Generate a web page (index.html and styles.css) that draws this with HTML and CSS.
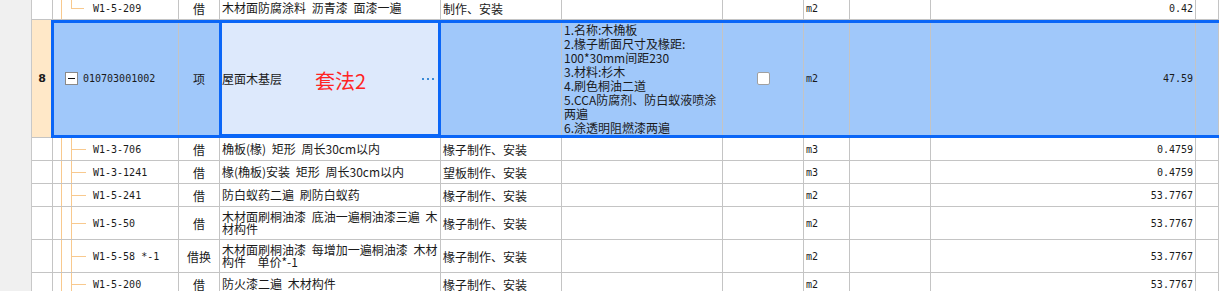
FILE: index.html
```html
<!DOCTYPE html>
<html lang="zh-CN">
<head>
    <meta charset="UTF-8">
    <title>清单定额</title>
    <link rel="stylesheet" href="styles.css">
</head>
<body>
    <div class="sheet">
        <div class="gutter"></div>
        <div class="rows">
            <div class="row">
                <div class="cell num"></div>
                <div class="cell tree last mono">W1-5-209</div>
                <div class="cell kind">借</div>
                <div class="cell name">木材面防腐涂料 沥青漆 面漆一遍</div>
                <div class="cell">制作、安装</div>
                <div class="cell"></div>
                <div class="cell"></div>
                <div class="cell mono">m2</div>
                <div class="cell"></div>
                <div class="cell qty mono">0.42</div>
                <div class="cell"></div>
            </div>

            <div class="row sel">
                <div class="cell num">8</div>
                <div class="cell tree open mono"><span class="toggle"></span>010703001002</div>
                <div class="cell kind">项</div>
                <div class="cell name active">屋面木基层<span class="anno">套法2</span><svg class="more" width="12" height="2" viewBox="0 0 12 2"><rect x="0" y="0" width="2" height="2"/><rect x="5" y="0" width="2" height="2"/><rect x="10" y="0" width="2" height="2"/></svg></div>
                <div class="cell"></div>
                <div class="cell desc">1.名称:木桷板<br>2.椽子断面尺寸及椽距:<br>100*30mm间距230<br>3.材料:杉木<br>4.刷色桐油二道<br>5.CCA防腐剂、防白蚁液喷涂<br>两遍<br>6.涂透明阻燃漆两遍</div>
                <div class="cell center"><span class="check"></span></div>
                <div class="cell mono">m2</div>
                <div class="cell"></div>
                <div class="cell qty mono">47.59</div>
                <div class="cell"></div>
            </div>

            <div class="row">
                <div class="cell num"></div>
                <div class="cell tree child mono">W1-3-706</div>
                <div class="cell kind">借</div>
                <div class="cell name">桷板(椽) 矩形 周长30cm以内</div>
                <div class="cell">椽子制作、安装</div>
                <div class="cell"></div>
                <div class="cell"></div>
                <div class="cell mono">m3</div>
                <div class="cell"></div>
                <div class="cell qty mono">0.4759</div>
                <div class="cell"></div>
            </div>

            <div class="row">
                <div class="cell num"></div>
                <div class="cell tree child mono">W1-3-1241</div>
                <div class="cell kind">借</div>
                <div class="cell name">椽(桷板)安装 矩形 周长30cm以内</div>
                <div class="cell">望板制作、安装</div>
                <div class="cell"></div>
                <div class="cell"></div>
                <div class="cell mono">m3</div>
                <div class="cell"></div>
                <div class="cell qty mono">0.4759</div>
                <div class="cell"></div>
            </div>

            <div class="row">
                <div class="cell num"></div>
                <div class="cell tree child mono">W1-5-241</div>
                <div class="cell kind">借</div>
                <div class="cell name">防白蚁药二遍 刷防白蚁药</div>
                <div class="cell">椽子制作、安装</div>
                <div class="cell"></div>
                <div class="cell"></div>
                <div class="cell mono">m2</div>
                <div class="cell"></div>
                <div class="cell qty mono">53.7767</div>
                <div class="cell"></div>
            </div>

            <div class="row tall">
                <div class="cell num"></div>
                <div class="cell tree child mono">W1-5-50</div>
                <div class="cell kind">借</div>
                <div class="cell name">木材面刷桐油漆 底油一遍桐油漆三遍 木<br>材构件</div>
                <div class="cell">椽子制作、安装</div>
                <div class="cell"></div>
                <div class="cell"></div>
                <div class="cell mono">m2</div>
                <div class="cell"></div>
                <div class="cell qty mono">53.7767</div>
                <div class="cell"></div>
            </div>

            <div class="row tall">
                <div class="cell num"></div>
                <div class="cell tree child mono">W1-5-58 *-1</div>
                <div class="cell kind">借换</div>
                <div class="cell name">木材面刷桐油漆 每增加一遍桐油漆 木材<br>构件&nbsp; 单价*-1</div>
                <div class="cell">椽子制作、安装</div>
                <div class="cell"></div>
                <div class="cell"></div>
                <div class="cell mono">m2</div>
                <div class="cell"></div>
                <div class="cell qty mono">53.7767</div>
                <div class="cell"></div>
            </div>

            <div class="row">
                <div class="cell num"></div>
                <div class="cell tree child mono">W1-5-200</div>
                <div class="cell kind">借</div>
                <div class="cell name">防火漆二遍 木材构件</div>
                <div class="cell">椽子制作、安装</div>
                <div class="cell"></div>
                <div class="cell"></div>
                <div class="cell mono">m2</div>
                <div class="cell"></div>
                <div class="cell qty mono">53.7767</div>
                <div class="cell"></div>
            </div>
        </div>
    </div>
</body>
</html>
```

FILE: styles.css
```css
html, body {
    margin: 0;
    height: 100%;
    overflow: hidden;
    background: #fff;
}
body {
    font-family: "Noto Sans CJK SC", sans-serif;
    font-size: 12px;
    color: #1a1a1a;
}
.sheet {
    display: flex;
    margin-top: -3px;
}
.gutter {
    flex: none;
    width: 31px;
    background: #f0f0f0;
    border-right: 1px solid #c8c8c8;
}
.rows { flex: 1; }
.row {
    display: grid;
    grid-template-columns: 21px 126px 41px 221px 121px 161px 81px 46px 81px 265px 1fr;
    height: 23px;
}
.row.tall { height: 33px; }
.cell {
    box-sizing: border-box;
    display: flex;
    align-items: center;
    padding: 0 2px;
    border-right: 1px solid #c4c4c4;
    border-bottom: 1px solid #c4c4c4;
    white-space: nowrap;
    overflow: hidden;
}
.mono {
    font-family: "DejaVu Sans Mono", monospace;
    font-size: 10px;
    white-space: pre;
}
.num {
    justify-content: center;
    font-family: "DejaVu Sans", sans-serif;
    font-weight: bold;
    font-size: 11px;
}
.kind, .center { justify-content: center; }
.qty { justify-content: flex-end; }
.name {
    word-spacing: 3px;
    line-height: 12px;
}

/* tree guide lines */
.tree {
    --tl: #f8c98e;
    padding-left: 40px;
}
.tree.child {
    background:
        linear-gradient(var(--tl), var(--tl)) 8px 0 / 1px 100% no-repeat,
        linear-gradient(var(--tl), var(--tl)) 18px 0 / 1px 100% no-repeat,
        linear-gradient(var(--tl), var(--tl)) 19px 50% / 14px 1px no-repeat;
}
.tree.last {
    background:
        linear-gradient(var(--tl), var(--tl)) 8px 0 / 1px 100% no-repeat,
        linear-gradient(var(--tl), var(--tl)) 18px 0 / 1px 50% no-repeat,
        linear-gradient(var(--tl), var(--tl)) 18px 50% / 13px 1px no-repeat;
}
.tree.open {
    padding-left: 12px;
    background:
        linear-gradient(var(--tl), var(--tl)) 8px 0 / 1px 100% no-repeat,
        linear-gradient(var(--tl), var(--tl)) 8px 50% / 4px 1px no-repeat,
        linear-gradient(var(--tl), var(--tl)) 18px 100% / 1px calc(50% - 6px) no-repeat;
}
.toggle {
    flex: none;
    box-sizing: border-box;
    width: 13px;
    height: 13px;
    margin-right: 5px;
    border: 1px solid #8a8a8a;
    background: #fff linear-gradient(#111, #111) center / 7px 1px no-repeat;
}

/* selected row */
.row.sel {
    position: relative;
    height: 118px;
}
.sel .cell { background: #a0c8fa; }
.sel .num { background: #ffe8c8; }
.sel .tree { background-color: #a0c8fa; }
.row.sel::after {
    content: "";
    position: absolute;
    left: 19px;
    right: -3px;
    top: 0;
    bottom: 0;
    border: 3px solid #0a66f7;
    pointer-events: none;
}
.sel .active {
    position: relative;
    overflow: visible;
    background: #dde9fc;
}
.sel .active::after {
    content: "";
    position: absolute;
    left: -1px;
    right: -1px;
    top: 0;
    bottom: 0;
    border: 3px solid #0a66f7;
}
.anno {
    position: absolute;
    left: 95px;
    top: 49px;
    font-size: 20px;
    line-height: 24px;
    color: #ff2424;
    word-spacing: 0;
}
.more {
    margin-left: auto;
    margin-right: 4px;
    fill: #3a8ad6;
}
.desc {
    white-space: nowrap;
    line-height: 14px;
}
.check {
    box-sizing: border-box;
    width: 13px;
    height: 13px;
    border: 1px solid #a0a0a0;
    border-radius: 2px;
    background: #fff;
}
```
